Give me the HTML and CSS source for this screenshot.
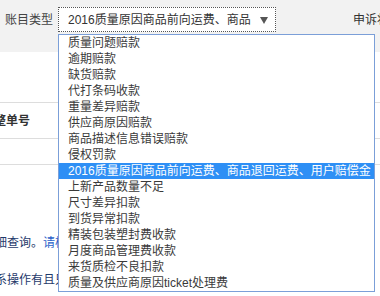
FILE: index.html
```html
<!DOCTYPE html>
<html lang="zh">
<head>
<meta charset="utf-8">
<link rel="stylesheet" href="styles.css">
</head>
<body>
<div class="page">
  <div class="topbar">
    <span class="label">账目类型</span>
    <div class="select">
      <span class="select-text">2016质量原因商品前向运费、商品</span>
      <span class="arrow"></span>
    </div>
    <span class="right-label">申诉状态</span>
  </div>
  <div class="content">
    <div class="table">
      <div class="thead"><span class="th">调整单号</span></div>
      <div class="trow"></div>
    </div>
    <p class="note note1">详细查询。<span class="link">请核对</span></p>
    <p class="note note2">联系操作有且只能</p>
  </div>
  <ul class="dropdown">
    <li>质量问题赔款</li>
    <li>逾期赔款</li>
    <li>缺货赔款</li>
    <li>代打条码收款</li>
    <li>重量差异赔款</li>
    <li>供应商原因赔款</li>
    <li>商品描述信息错误赔款</li>
    <li>侵权罚款</li>
    <li class="selected">2016质量原因商品前向运费、商品退回运费、用户赔偿金</li>
    <li>上新产品数量不足</li>
    <li>尺寸差异扣款</li>
    <li>到货异常扣款</li>
    <li>精装包装塑封费收款</li>
    <li>月度商品管理费收款</li>
    <li>来货质检不良扣款</li>
    <li>质量及供应商原因ticket处理费</li>
  </ul>
</div>
</body>
</html>
```
FILE: styles.css
```css
html, body {
  margin: 0;
  padding: 0;
  background: #ffffff;
}
body {
  font-family: "Liberation Sans", "Noto Sans CJK SC", sans-serif;
  font-size: 12px;
  color: #333333;
  width: 380px;
  height: 296px;
  overflow: hidden;
}
.page {
  position: relative;
  width: 380px;
  height: 296px;
  overflow: hidden;
}
.topbar {
  height: 52px;
  background: #f2f2f2;
  display: flex;
  align-items: center;
  padding-top: 7px;
  padding-bottom: 20px;
  box-sizing: border-box;
  overflow: hidden;
}
.label {
  flex-shrink: 0;
  margin-left: 5px;
  width: 53px;
  line-height: 16px;
  color: #444;
}
.select {
  flex-shrink: 0;
  width: 218px;
  height: 25px;
  box-sizing: border-box;
  border: 1px dotted #555;
  background: #fff;
  display: flex;
  align-items: center;
  padding-left: 9px;
  padding-right: 22px;
  position: relative;
  overflow: hidden;
}
.select-text {
  line-height: 16px;
  color: #333;
  white-space: nowrap;
  overflow: hidden;
}
.arrow {
  position: absolute;
  right: 7px;
  top: 9px;
  width: 0;
  height: 0;
  border-left: 4px solid transparent;
  border-right: 4px solid transparent;
  border-top: 7px solid #555;
}
.right-label {
  flex-shrink: 0;
  margin-left: 77px;
  white-space: nowrap;
  line-height: 16px;
  color: #333;
}
.content {
  padding-top: 50px;
}
.table {
  border-top: 1px solid #dddddd;
}
.thead {
  height: 35px;
  border-bottom: 1px solid #dddddd;
  display: flex;
  align-items: center;
  margin-left: -18px;
}
.th {
  font-weight: bold;
  line-height: 16px;
}
.trow {
  height: 25px;
  border-bottom: 1px solid #dddddd;
}
.note {
  margin: 0;
  line-height: 16px;
  color: #1f3a6b;
  white-space: nowrap;
  margin-left: -17px;
}
.note1 {
  margin-top: 70px;
}
.note2 {
  margin-top: 21px;
}
.link {
  color: #2a62c9;
}
.dropdown {
  position: absolute;
  left: 58px;
  top: 34px;
  width: 317px;
  box-sizing: border-box;
  margin: 0;
  padding: 0;
  list-style: none;
  border: 1px solid #7b9fd8;
  background: #fff;
}
.dropdown li {
  height: 16px;
  line-height: 16px;
  padding-left: 9px;
  white-space: nowrap;
  color: #3a3a3a;
}
.dropdown li.selected {
  background: #2e8ff5;
  color: #fff;
}
```
